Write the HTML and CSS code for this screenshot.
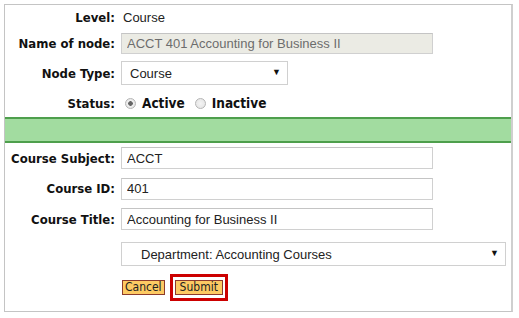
FILE: index.html
```html
<!DOCTYPE html>
<html lang="en">
<head>
    <meta charset="UTF-8">
    <title>Edit Node</title>
    <link rel="stylesheet" href="styles.css">
</head>
<body>
    <form class="panel">
        <div class="row r-level">
            <label class="lbl">Level:</label>
            <span class="val">Course</span>
        </div>
        <div class="row r-name">
            <label class="lbl">Name of node:</label>
            <input class="field disabled" type="text" value="ACCT 401 Accounting for Business II" disabled>
        </div>
        <div class="row r-type">
            <label class="lbl">Node Type:</label>
            <span class="select-wrap short">
                <select class="select"><option>Course</option></select>
                <span class="arrow">&#9660;</span>
            </span>
        </div>
        <div class="row r-status">
            <label class="lbl">Status:</label>
            <span class="radios">
                <label class="radio"><input type="radio" name="status" checked> Active</label>
                <label class="radio"><input type="radio" name="status"> Inactive</label>
            </span>
        </div>

        <div class="band"></div>

        <div class="row r-subject">
            <label class="lbl">Course Subject:</label>
            <input class="field" type="text" value="ACCT">
        </div>
        <div class="row r-id">
            <label class="lbl">Course ID:</label>
            <input class="field" type="text" value="401">
        </div>
        <div class="row r-title">
            <label class="lbl">Course Title:</label>
            <input class="field" type="text" value="Accounting for Business II">
        </div>
        <div class="row r-dept">
            <span class="lbl"></span>
            <span class="select-wrap long">
                <select class="select"><option>Department: Accounting Courses</option></select>
                <span class="arrow">&#9660;</span>
            </span>
        </div>
        <div class="row r-buttons">
            <span class="lbl"></span>
            <span class="buttons">
                <button type="button" class="btn">Cancel</button>
                <span class="highlight"><button type="submit" class="btn">Submit</button></span>
            </span>
        </div>
    </form>
</body>
</html>
```

FILE: styles.css
```css
body {
    margin: 0;
    padding: 4px 6px 6px 4px;
    background: #fff;
    font-family: "Liberation Sans", Arial, sans-serif;
    font-size: 13px;
    color: #222;
}
.panel {
    border: 1px solid #c4c4c4;
    border-right: 2px solid #cfcfcf;
    box-sizing: border-box;
    height: 308px;
}
.row {
    display: flex;
    align-items: center;
}
.lbl {
    width: 110px;
    flex: none;
    text-align: right;
    margin-right: 6px;
    font-family: "DejaVu Sans Condensed", "DejaVu Sans", sans-serif;
    font-weight: bold;
    font-size: 13px;
    color: #111;
}
.val {
    margin-left: 2px;
    color: #222;
}
.r-level { height: 24px; }
.r-name { height: 28px; }
.r-type { height: 32px; }
.r-status { height: 28px; }
.r-subject { height: 30px; }
.r-id { height: 31px; }
.r-title { height: 30px; }
.r-dept { height: 40px; }
.r-buttons { height: 26px; }

.field {
    width: 312px;
    height: 22px;
    box-sizing: border-box;
    border: 1px solid #d0d0d0;
    border-top-color: #c4c4c4;
    padding: 0 5px;
    margin: 0;
    font-family: "Liberation Sans", Arial, sans-serif;
    font-size: 13px;
    color: #222;
    background: #fff;
}
.field.disabled {
    height: 21px;
    background: #ebebe4;
    color: #6d6d6d;
}
.select-wrap {
    position: relative;
    display: inline-block;
}
.select {
    -webkit-appearance: none;
    appearance: none;
    height: 24px;
    box-sizing: border-box;
    border: 1px solid #d0d0d0;
    background: #fff;
    font-family: "Liberation Sans", Arial, sans-serif;
    font-size: 13px;
    color: #222;
    padding: 0 0 0 8px;
    margin: 0;
    border-radius: 0;
}
.short .select { width: 167px; }
.long .select { width: 385px; padding-left: 19px; }
.arrow {
    position: absolute;
    right: 7px;
    top: 6px;
    font-size: 9px;
    color: #111;
    pointer-events: none;
}
.radios {
    display: flex;
    gap: 10px;
    margin-left: 4px;
}
.radio {
    display: flex;
    align-items: center;
    font-family: "DejaVu Sans Condensed", "DejaVu Sans", sans-serif;
    font-weight: bold;
    font-size: 13.5px;
    color: #111;
}
.radio input {
    -webkit-appearance: none;
    appearance: none;
    width: 11px;
    height: 11px;
    margin: 0 6px 0 0;
    border: 1px solid #b5b5b5;
    border-radius: 50%;
    background: radial-gradient(circle, #f4f4f4 0%, #e2e2e2 100%);
    box-sizing: border-box;
}
.radio input:checked {
    background: radial-gradient(circle, #666 0 2px, #f0f0f0 2.6px, #e0e0e0 100%);
}
.band {
    height: 26px;
    box-sizing: border-box;
    background: #a2dca0;
    border-top: 2px solid #4e9f4c;
    border-bottom: 2px solid #4e9f4c;
}
.buttons {
    display: flex;
    align-items: center;
    margin-left: 1px;
    gap: 5px;
}
.btn {
    font-family: "DejaVu Sans Condensed", "DejaVu Sans", sans-serif;
    font-size: 12px;
    color: #222;
    background: #fdca63;
    border: 1px solid #8c3b2c;
    height: 15px;
    line-height: 13px;
    padding: 0 2px;
    margin: 0;
    border-radius: 0;
}
.highlight .btn {
    padding: 0 4px;
}
.highlight {
    border: 3px solid #c00;
    padding: 3px 2px;
    display: inline-flex;
}
```
